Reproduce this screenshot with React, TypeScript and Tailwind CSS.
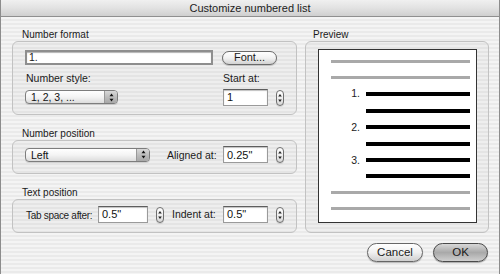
import type { ReactNode } from 'react'

const font = "font-['Liberation_Sans',Arial,sans-serif]"

function Stepper() {
  return (
    <div className="w-[8px] h-[16px] rounded-full border border-[#6f6f6f] bg-gradient-to-b from-white via-[#eeeeee] to-[#d6d6d6] flex items-center justify-center shadow-[0_1px_0_rgba(0,0,0,0.1)]">
      <svg width="4" height="10" viewBox="0 0 4 10">
        <path d="M2 1 L3.8 3.6 L0.2 3.6 Z" fill="#222" />
        <path d="M2 9 L3.8 6.4 L0.2 6.4 Z" fill="#222" />
      </svg>
    </div>
  )
}

function Field({ value, w }: { value: string; w: string }) {
  return (
    <div
      className={`${w} h-[17px] bg-white border border-[#9a9a9a] border-t-[#5e5e5e] shadow-[inset_0_1px_1px_rgba(0,0,0,0.25)] flex items-center px-[3px] text-[11px] text-[#111]`}
    >
      {value}
    </div>
  )
}

function Popup({ value, w }: { value: string; w: string }) {
  return (
    <div
      className={`${w} h-[14px] rounded-[4px] border border-[#7d7d7d] bg-gradient-to-b from-white via-[#f4f4f4] to-[#dcdcdc] flex items-stretch overflow-hidden shadow-[0_1px_0_rgba(0,0,0,0.12)]`}
    >
      <div className="flex-1 flex items-center pl-[5px] text-[10.5px] text-[#111] leading-none">{value}</div>
      <div className="w-[13px] bg-gradient-to-b from-[#d8d8d8] via-[#bdbdbd] to-[#a8a8a8] border-l border-[#999] flex items-center justify-center">
        <svg width="5" height="9" viewBox="0 0 5 9">
          <path d="M2.5 0.5 L4.5 3.2 L0.5 3.2 Z" fill="#111" />
          <path d="M2.5 8.5 L4.5 5.8 L0.5 5.8 Z" fill="#111" />
        </svg>
      </div>
    </div>
  )
}

function Group({ label, pl = 'pl-[10px]', className, children }: { label: string; pl?: string; className: string; children: ReactNode }) {
  return (
    <div className="flex flex-col">
      <div className={`h-[10px] ${pl} text-[10px] leading-[10px] text-[#1a1a1a] mb-[1px] whitespace-nowrap`}>{label}</div>
      <div className={`rounded-[6px] border border-[#c2c2c2] bg-black/[0.025] ${className}`}>{children}</div>
    </div>
  )
}

const rows: { h: string; kind: 'gray' | 'black'; num?: string }[] = [
  { h: 'h-[16px]', kind: 'gray' },
  { h: 'h-[16px]', kind: 'gray' },
  { h: 'h-[17px]', kind: 'black', num: '1.' },
  { h: 'h-[17px]', kind: 'black' },
  { h: 'h-[16px]', kind: 'black', num: '2.' },
  { h: 'h-[17px]', kind: 'black' },
  { h: 'h-[16px]', kind: 'black', num: '3.' },
  { h: 'h-[16px]', kind: 'black' },
  { h: 'h-[16px]', kind: 'gray' },
  { h: 'h-[17px]', kind: 'gray' },
]

export default function App() {
  return (
    <div className={`w-[500px] h-[274px] overflow-hidden ${font} text-[#1a1a1a] border-x border-[#8c8c8c] flex flex-col`}>
      {/* title bar */}
      <div className="h-[17px] shrink-0 bg-gradient-to-b from-[#f0f0f0] via-[#e2e2e2] to-[#cfcfcf] border-b border-[#8f8f8f] flex items-center justify-center text-[11px] text-[#1c1c1c]">
        Customize numbered list
      </div>

      <div className="flex-1 bg-[repeating-linear-gradient(180deg,#f4f4f4_0px,#f4f4f4_2px,#eaeaea_2px,#eaeaea_4px)] flex flex-col">
        <div className="flex pl-[11px] pt-[13px] gap-[8px]">
          {/* left column */}
          <div className="w-[285px] flex flex-col">
            <Group label="Number format" className="h-[74px] pl-[12px] pt-[8px]">
              <div className="flex items-center">
                <div className="w-[188px] h-[15px] border-2 border-[#8e8e8e] bg-white flex items-center px-[2px] text-[10.5px] leading-none shadow-[inset_0_1px_1px_rgba(0,0,0,0.3)]">
                  1.
                </div>
                <div className="ml-[9px] w-[55px] h-[14px] rounded-full border border-[#6a6a6a] bg-gradient-to-b from-white via-[#f2f2f2] to-[#d2d2d2] flex items-center justify-center text-[11px] leading-none shadow-[0_1px_1px_rgba(0,0,0,0.2)]">
                  Font...
                </div>
              </div>
              <div className="flex mt-[7px]">
                <div className="w-[198px] flex flex-col">
                  <div className="text-[10.5px] leading-[12px] pl-[1px]">Number style:</div>
                  <div className="mt-[6px]">
                    <Popup value="1, 2, 3, ..." w="w-[93px]" />
                  </div>
                </div>
                <div className="flex flex-col">
                  <div className="text-[10.5px] leading-[12px]">Start at:</div>
                  <div className="flex items-center gap-[8px] mt-[5px]">
                    <Field value="1" w="w-[45px]" />
                    <Stepper />
                  </div>
                </div>
              </div>
            </Group>

            <div className="mt-[14px]">
              <Group label="Number position" className="h-[34px] pl-[12px] pt-[5px]">
                <div className="flex items-center">
                  <Popup value="Left" w="w-[125px]" />
                  <div className="ml-[17px] w-[56px] text-[10.5px] mt-[2px] whitespace-nowrap">Aligned at:</div>
                  <Field value={'0.25"'} w="w-[45px]" />
                  <div className="ml-[8px]">
                    <Stepper />
                  </div>
                </div>
              </Group>
            </div>

            <div className="mt-[14px]">
              <Group label="Text position" className="h-[34px] pl-[13px] pt-[6px]">
                <div className="flex items-center">
                  <div className="w-[72px] text-[10px] tracking-[-0.3px] mt-[1px] whitespace-nowrap">Tab space after:</div>
                  <Field value={'0.5"'} w="w-[50px]" />
                  <div className="ml-[8px]">
                    <Stepper />
                  </div>
                  <div className="ml-[8px] w-[51px] text-[10.5px] mt-[1px] whitespace-nowrap">Indent at:</div>
                  <Field value={'0.5"'} w="w-[45px]" />
                  <div className="ml-[8px]">
                    <Stepper />
                  </div>
                </div>
              </Group>
            </div>
          </div>

          {/* preview */}
          <div className="w-[184px]">
            <Group label="Preview" pl="pl-[8px]" className="h-[192px] pl-[12px] pt-[7px]">
              <div className="w-[159px] h-[174px] bg-white border border-[#333] pt-[3px] pl-[12px] pr-[6px]">
                {rows.map((r, i) => (
                  <div key={i} className={`${r.h} flex items-center`}>
                    {r.kind === 'gray' ? (
                      <div className="flex-1 h-[3px] bg-[#a9a9a9]" />
                    ) : (
                      <>
                        <div className="w-[35px] pr-[6px] text-right text-[10.5px] leading-none text-[#222]">{r.num}</div>
                        <div className="flex-1 h-[4px] bg-black" />
                      </>
                    )}
                  </div>
                ))}
              </div>
            </Group>
          </div>
        </div>

        {/* buttons */}
        <div className="flex justify-end gap-[10px] pr-[11px] mt-[10px]">
          <div className="w-[56px] h-[19px] rounded-full border border-[#666] bg-gradient-to-b from-white via-[#f0f0f0] to-[#cfcfcf] flex items-center justify-center text-[11.5px] leading-none shadow-[0_1px_1px_rgba(0,0,0,0.25)]">
            Cancel
          </div>
          <div className="w-[55px] h-[19px] rounded-full border border-[#4a4a4a] bg-gradient-to-b from-[#d8d8d8] via-[#a9a9a9] to-[#cfcfcf] flex items-center justify-center text-[11.5px] leading-none shadow-[0_1px_1px_rgba(0,0,0,0.3)]">
            OK
          </div>
        </div>
      </div>
    </div>
  )
}
